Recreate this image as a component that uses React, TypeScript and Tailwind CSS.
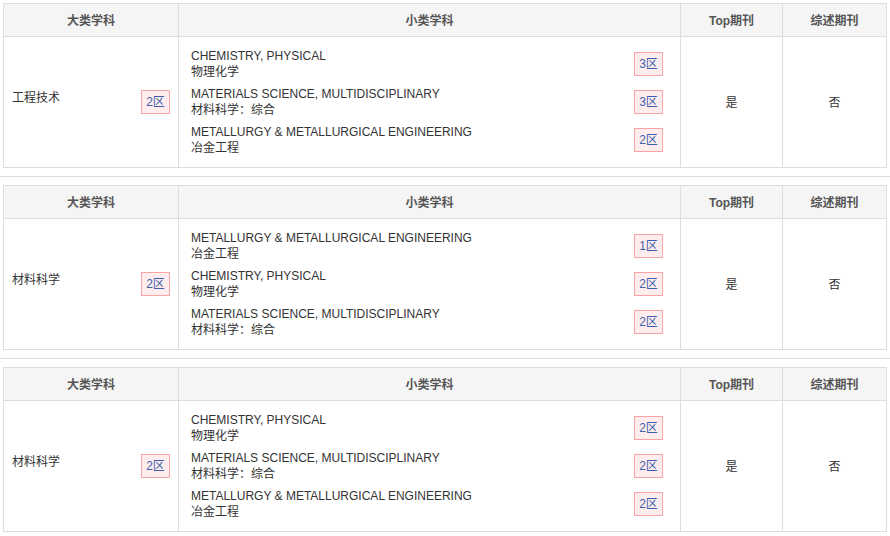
const FONT = { fontFamily: '"Liberation Sans", Arial, "Noto Sans CJK SC", sans-serif' };

type Sub = { en: string; zh: string; zone: string };
type Block = { major: string; zone: string; subs: Sub[] };

const PHYS = { en: "CHEMISTRY, PHYSICAL", zh: "物理化学" };
const MAT = { en: "MATERIALS SCIENCE, MULTIDISCIPLINARY", zh: "材料科学：综合" };
const MET = { en: "METALLURGY & METALLURGICAL ENGINEERING", zh: "冶金工程" };

const blocks: Block[] = [
  {
    major: "工程技术",
    zone: "2区",
    subs: [
      { ...PHYS, zone: "3区" },
      { ...MAT, zone: "3区" },
      { ...MET, zone: "2区" },
    ],
  },
  {
    major: "材料科学",
    zone: "2区",
    subs: [
      { ...MET, zone: "1区" },
      { ...PHYS, zone: "2区" },
      { ...MAT, zone: "2区" },
    ],
  },
  {
    major: "材料科学",
    zone: "2区",
    subs: [
      { ...PHYS, zone: "2区" },
      { ...MAT, zone: "2区" },
      { ...MET, zone: "2区" },
    ],
  },
];

function Badge({ text }: { text: string }) {
  return (
    <span className="inline-flex h-[24px] w-[29px] items-center justify-center border border-[#f9a5a5] bg-[#ffeded] text-[12px] text-[#3a5fae]">
      {text}
    </span>
  );
}

function ZoneTable({ block }: { block: Block }) {
  return (
    <table className="ml-[3px] w-[883px] table-fixed border-collapse text-[12px] text-[#333]">
      <colgroup>
        <col className="w-[175px]" />
        <col className="w-[502px]" />
        <col className="w-[102px]" />
        <col className="w-[104px]" />
      </colgroup>
      <thead>
        <tr className="h-[33px] bg-[#f5f5f5] text-[#555]">
          <th className="border border-[#ddd] pt-[1px] font-bold">大类学科</th>
          <th className="border border-[#ddd] pt-[1px] font-bold">小类学科</th>
          <th className="border border-[#ddd] pt-[1px] font-bold">Top期刊</th>
          <th className="border border-[#ddd] pt-[1px] font-bold">综述期刊</th>
        </tr>
      </thead>
      <tbody>
        <tr className="h-[131px]">
          <td className="border border-[#ddd] pl-[8px] pr-[8px]">
            <div className="flex items-center justify-between">
              <span className="mb-[9px]">{block.major}</span>
              <Badge text={block.zone} />
            </div>
          </td>
          <td className="border border-[#ddd] pl-[12px] pr-[17px]">
            <div className="flex flex-col gap-[6px]">
              {block.subs.map((s) => (
                <div key={s.en} className="flex items-center justify-between">
                  <div className="leading-[16px]">
                    <div>{s.en}</div>
                    <div>{s.zh}</div>
                  </div>
                  <Badge text={s.zone} />
                </div>
              ))}
            </div>
          </td>
          <td className="border border-[#ddd] pt-[2px] text-center">是</td>
          <td className="border border-[#ddd] pt-[2px] text-center">否</td>
        </tr>
      </tbody>
    </table>
  );
}

export default function App() {
  return (
    <div className="h-[536px] w-[890px] overflow-hidden bg-white" style={FONT}>
      <div className="h-[3px] overflow-hidden">
        <div className="-mt-[13px] pl-[3px] text-[12px] font-bold leading-[15px] text-[#1a9bf5]">
          分区表 <span>升级版</span> <span className="ml-[60px]">查看更多</span>
        </div>
      </div>
      {blocks.map((b, i) => (
        <div key={i}>
          {i > 0 && <div className="my-[8px] h-[1px] w-full bg-[#ddd]" />}
          <ZoneTable block={b} />
        </div>
      ))}
    </div>
  );
}
